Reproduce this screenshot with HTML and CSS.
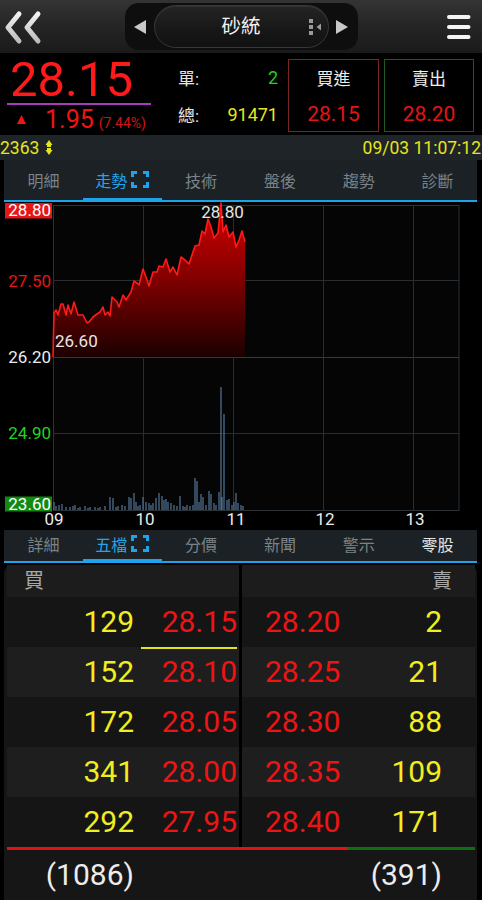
FILE: index.html
```html
<!DOCTYPE html>
<html lang="zh-Hant">
<head>
<meta charset="utf-8">
<title>砂統</title>
<link rel="stylesheet" href="styles.css">
</head>
<body>
<div class="app">
  <header class="topbar">
    <svg class="back" width="48" height="53" viewBox="0 0 48 53">
      <defs>
        <linearGradient id="chev" x1="0" y1="0" x2="0" y2="1">
          <stop offset="0" stop-color="#f2f2f2"/>
          <stop offset="1" stop-color="#bdbdbd"/>
        </linearGradient>
      </defs>
      <path d="M19 14 L8 27.5 L19 41 M38 14 L27 27.5 L38 41" fill="none" stroke="url(#chev)" stroke-width="5" stroke-linecap="round" stroke-linejoin="round"/>
    </svg>
    <div class="picker">
      <svg class="arrow" width="12" height="16" viewBox="0 0 12 16"><polygon points="12,1 0,8 12,15" fill="#c8c8c8"/></svg>
      <div class="pill">
        <span class="name">砂統</span>
        <svg class="pill-ico" width="13" height="18" viewBox="0 0 13 18">
          <rect x="0" y="1" width="4" height="4" fill="#9a9a9a"/>
          <rect x="0" y="7" width="4" height="4" fill="#9a9a9a"/>
          <rect x="0" y="13" width="4" height="4" fill="#9a9a9a"/>
          <polygon points="12,5.5 7.5,9 12,12.5" fill="#9a9a9a"/>
        </svg>
      </div>
      <svg class="arrow" width="12" height="16" viewBox="0 0 12 16"><polygon points="0,1 12,8 0,15" fill="#c8c8c8"/></svg>
    </div>
    <svg class="menu" width="48" height="53" viewBox="0 0 48 53">
      <rect x="13" y="15" width="23.5" height="4" rx="2" fill="#f4f4f4"/>
      <rect x="13" y="25" width="23.5" height="4" rx="2" fill="#f4f4f4"/>
      <rect x="13" y="35" width="23.5" height="4" rx="2" fill="#f4f4f4"/>
    </svg>
  </header>

  <section class="quote">
    <div class="last">
      <div class="price-big">28.15</div>
      <div class="uline"></div>
      <div class="chg">
        <svg class="up" width="9" height="9" viewBox="0 0 9 9"><polygon points="4.5,0 9,9 0,9" fill="#f01414"/></svg>
        <span class="chg-val">1.95</span>
        <span class="chg-pct">(7.44%)</span>
      </div>
    </div>
    <div class="vol">
      <span class="vlabel">單:</span><span class="vval green">2</span>
      <span class="vlabel">總:</span><span class="vval yellow">91471</span>
    </div>
    <div class="bs buy">
      <span class="bs-label">買進</span>
      <span class="bs-val">28.15</span>
    </div>
    <div class="bs sell">
      <span class="bs-label">賣出</span>
      <span class="bs-val">28.20</span>
    </div>
  </section>

  <div class="status">
    <span class="code">2363
      <svg class="updown" width="8" height="15" viewBox="0 0 8 15">
        <polygon points="4,0 7.5,5 0.5,5" fill="#e6e41c"/>
        <rect x="2" y="5" width="4" height="2" fill="#e6e41c"/>
        <rect x="2" y="8" width="4" height="2" fill="#e6e41c"/>
        <polygon points="0.5,10 7.5,10 4,15" fill="#e6e41c"/>
      </svg>
    </span>
    <span class="time">09/03 11:07:12</span>
  </div>

  <nav class="tabs">
    <span class="tab">明細</span>
    <span class="tab on">走勢
      <svg class="full" width="18" height="17" viewBox="0 0 18 17"><path d="M1.5 6V1.5H6 M12 1.5H16.5V6 M16.5 11V15.5H12 M6 15.5H1.5V11" fill="none" stroke="#1ea2ea" stroke-width="3"/></svg>
    </span>
    <span class="tab">技術</span>
    <span class="tab">盤後</span>
    <span class="tab">趨勢</span>
    <span class="tab">診斷</span>
  </nav>

  <svg class="chart" width="482" height="328" viewBox="0 0 482 328">
    <defs>
      <linearGradient id="area" x1="0" y1="0" x2="0" y2="155" gradientUnits="userSpaceOnUse">
        <stop offset="0" stop-color="#d40000"/>
        <stop offset="0.45" stop-color="#8a0000"/>
        <stop offset="1" stop-color="#1c0000"/>
      </linearGradient>
    </defs>
    <rect x="53.5" y="3.5" width="405.5" height="305" fill="#050505" stroke="#2c3236"/>
    <g stroke="#272d31" stroke-width="1">
      <line x1="53" y1="78.5" x2="459" y2="78.5"/>
      <line x1="53" y1="155.5" x2="459" y2="155.5" stroke="#333a3e"/>
      <line x1="53" y1="231.5" x2="459" y2="231.5"/>
      <line x1="143.5" y1="3" x2="143.5" y2="308"/>
      <line x1="233.5" y1="3" x2="233.5" y2="308"/>
      <line x1="323.5" y1="3" x2="323.5" y2="308"/>
      <line x1="413.5" y1="3" x2="413.5" y2="308"/>
    </g>
    <polygon fill="url(#area)" points="53,155 54,111 56,108 58,113 61,102 63,102 66,113 68,103 71,112 74,100 78,113 83,113 87,121 89,120 93,115 97,112 100,110 103,105 105,113 108,110 110,114 112,95 117,100 119,105 123,93 126,98 131,90 134,79 137,81 139,83 143,67 147,78 149,84 153,70 157,70 159,64 163,65 166,57 170,70 173,65 177,73 181,55 185,58 189,62 195,44 199,43 202,29 205,32 208,17 211,25 214,36 218,31 221,1 223,30 226,23 229,35 233,30 236,45 239,38 242,29 245,40 245,155"/>
    <polyline fill="none" stroke="#ff1a1a" stroke-width="1.6" stroke-linejoin="round" points="53,155 54,111 56,108 58,113 61,102 63,102 66,113 68,103 71,112 74,100 78,113 83,113 87,121 89,120 93,115 97,112 100,110 103,105 105,113 108,110 110,114 112,95 117,100 119,105 123,93 126,98 131,90 134,79 137,81 139,83 143,67 147,78 149,84 153,70 157,70 159,64 163,65 166,57 170,70 173,65 177,73 181,55 185,58 189,62 195,44 199,43 202,29 205,32 208,17 211,25 214,36 218,31 221,1 223,30 226,23 229,35 233,30 236,45 239,38 242,29 245,40"/>
    <path stroke="#4d6e8e" stroke-width="1.3" fill="none" d="M54 308V300M56 308V304M59 308V303M62 308V302M66 308V305M70 308V305M73 308V304M75 308V303M78 308V306M80 308V305M85 308V304M88 308V306M90 308V305M95 308V305M98 308V306M100 308V305M105 308V304M110 308V295M113 308V296M116 308V305M118 308V304M122 308V303M125 308V304M129 308V295M131 308V296M134 308V291M136 308V300M138 308V304M140 308V303M143 308V295M146 308V300M149 308V301M151 308V303M153 308V301M156 308V296M159 308V291M162 308V294M164 308V298M166 308V297M168 308V300M171 308V301M174 308V303M177 308V304M180 308V294M183 308V304M185 308V305M187 308V303M190 308V304M193 308V303M195 308V276M197 308V279M199 308V300M201 308V292M203 308V295M206 308V303M209 308V289M211 308V292M214 308V301M216 308V303M219 308V290M221 308V185M222 308V295M224 308V212M227 308V298M229 308V297M232 308V303M234 308V300M236 308V291M238 308V301M241 308V303M243 308V304"/>
    <rect x="5" y="1" width="47" height="15.5" fill="#e41616"/>
    <rect x="5" y="294.5" width="47" height="15" fill="#128a12"/>
    <g class="axis">
      <text x="51" y="14" fill="#ffffff" text-anchor="end">28.80</text>
      <text x="51" y="85" fill="#e41616" text-anchor="end">27.50</text>
      <text x="51" y="161" fill="#ececec" text-anchor="end">26.20</text>
      <text x="51" y="237" fill="#22d422" text-anchor="end">24.90</text>
      <text x="51" y="308" fill="#ffffff" text-anchor="end">23.60</text>
      <text x="54" y="323" fill="#ececec" text-anchor="middle">09</text>
      <text x="145" y="323" fill="#ececec" text-anchor="middle">10</text>
      <text x="236" y="323" fill="#ececec" text-anchor="middle">11</text>
      <text x="325" y="323" fill="#ececec" text-anchor="middle">12</text>
      <text x="415" y="323" fill="#ececec" text-anchor="middle">13</text>
      <text x="222.5" y="16" fill="#e6e6e6" text-anchor="middle">28.80</text>
      <text x="55" y="145" fill="#e6e6e6">26.60</text>
    </g>
  </svg>

  <nav class="tabs sub">
    <span class="tab">詳細</span>
    <span class="tab on">五檔
      <svg class="full" width="18" height="17" viewBox="0 0 18 17"><path d="M1.5 6V1.5H6 M12 1.5H16.5V6 M16.5 11V15.5H12 M6 15.5H1.5V11" fill="none" stroke="#1ea2ea" stroke-width="3"/></svg>
    </span>
    <span class="tab">分價</span>
    <span class="tab">新聞</span>
    <span class="tab">警示</span>
    <span class="tab bright">零股</span>
  </nav>

  <section class="book">
    <div class="sides">
      <div class="side">
        <div class="bhead">買</div>
        <div class="lrow dark"><span class="qty">129</span><span class="px cur">28.15</span></div>
        <div class="lrow"><span class="qty">152</span><span class="px">28.10</span></div>
        <div class="lrow dark"><span class="qty">172</span><span class="px">28.05</span></div>
        <div class="lrow"><span class="qty">341</span><span class="px">28.00</span></div>
        <div class="lrow dark"><span class="qty">292</span><span class="px">27.95</span></div>
      </div>
      <div class="side">
        <div class="bhead right">賣</div>
        <div class="rrow dark"><span class="px">28.20</span><span class="qty">2</span></div>
        <div class="rrow"><span class="px">28.25</span><span class="qty">21</span></div>
        <div class="rrow dark"><span class="px">28.30</span><span class="qty">88</span></div>
        <div class="rrow"><span class="px">28.35</span><span class="qty">109</span></div>
        <div class="rrow dark"><span class="px">28.40</span><span class="qty">171</span></div>
      </div>
    </div>
    <div class="ratio"><span class="r-buy"></span><span class="r-sell"></span></div>
    <div class="totals">
      <span class="tot-l">(1086)</span>
      <span class="tot-r">(391)</span>
    </div>
  </section>
</div>
</body>
</html>
```
FILE: styles.css
```css
html, body {
  margin: 0;
  padding: 0;
  background: #000;
}
body {
  width: 482px;
  height: 900px;
  overflow: hidden;
  font-family: Roboto, "Noto Sans CJK TC", sans-serif;
  color: #eee;
}
.app {
  width: 482px;
}

/* top bar */
.topbar {
  height: 53px;
  display: grid;
  grid-template-columns: 1fr 233px 1fr;
  align-items: center;
  background: linear-gradient(#343434, #262626 45%, #1a1a1a);
}
.back { display: block; }
.menu { display: block; justify-self: end; }
.picker {
  height: 47px;
  box-sizing: border-box;
  background: #0e0e0e;
  border-radius: 14px;
  display: flex;
  align-items: center;
  padding: 0 10px 0 9px;
}
.arrow { display: block; flex: none; }
.pill {
  position: relative;
  width: 175px;
  height: 43px;
  box-sizing: border-box;
  margin: 0 7px 0 8px;
  border-radius: 22px;
  border: 1px solid #383838;
  background: linear-gradient(#242424, #171717 60%, #111);
  box-shadow: inset 0 1px 0 rgba(255,255,255,0.07);
  display: flex;
  align-items: center;
  justify-content: center;
}
.name {
  font-size: 19.5px;
  color: #f2f2f2;
  line-height: 1;
}
.pill-ico {
  position: absolute;
  right: 6px;
  top: 12px;
}

/* quote */
.quote {
  height: 82px;
  display: flex;
  background: #000;
}
.last {
  width: 144px;
  margin-left: 7px;
  padding-top: 4px;
}
.price-big {
  font-size: 49px;
  line-height: 46px;
  color: #ff1a1a;
  padding-left: 3px;
}
.uline {
  height: 2px;
  background: #a63cb8;
}
.chg {
  display: flex;
  align-items: baseline;
  margin-top: 3px;
  line-height: 24px;
}
.up {
  align-self: center;
  margin-left: 10px;
  margin-right: 19px;
  margin-top: -4px;
}
.chg-val {
  font-size: 25px;
  color: #f01414;
}
.chg-pct {
  font-size: 14px;
  color: #d21414;
  margin-left: 5px;
}
.vol {
  flex: 1;
  display: grid;
  grid-template-columns: auto 1fr;
  grid-template-rows: 38px 37px;
  align-items: center;
  padding: 5px 10px 0 27px;
}
.vlabel {
  font-size: 17px;
  color: #e6e6e6;
}
.vval {
  font-size: 18px;
  text-align: right;
}
.green { color: #1ed41e; }
.yellow { color: #e6e61e; }
.bs {
  margin-top: 6px;
  height: 73px;
  box-sizing: border-box;
  display: flex;
  flex-direction: column;
  align-items: center;
}
.buy {
  width: 91px;
  border: 1.5px solid #7a2424;
}
.sell {
  width: 90px;
  margin-left: 5px;
  margin-right: 8px;
  border: 1.5px solid #1e581e;
}
.bs-label {
  font-size: 17px;
  line-height: 38px;
  color: #eeeeee;
}
.bs-val {
  font-size: 21px;
  line-height: 32px;
  color: #e41414;
}

/* status */
.status {
  height: 25px;
  background: #1e2428;
  display: flex;
  justify-content: space-between;
  align-items: center;
  color: #e6e41c;
  font-size: 17.5px;
  padding-right: 1px;
}
.code {
  display: flex;
  align-items: center;
  gap: 6px;
}
.updown { display: block; }

/* tabs */
.tabs {
  height: 42px;
  margin: 0 5px 0 4px;
  background: #1b2125;
  display: flex;
}
.tab {
  flex: 1;
  display: flex;
  align-items: center;
  justify-content: center;
  gap: 4px;
  font-size: 16px;
  color: #7b8387;
  box-sizing: border-box;
  padding-bottom: 3px;
  box-shadow: inset 0 -2px 0 #1ea2ea;
}
.tab.on {
  color: #26a4e8;
  box-shadow: inset 0 -4px 0 #1ea2ea;
}
.tab.bright {
  color: #e4e4e4;
}
.full { display: block; }
.tabs.sub {
  height: 33px;
}
.tabs.sub .tab {
  padding-bottom: 6px;
}

/* chart */
.chart {
  display: block;
  background: #000;
}
.axis text {
  font-family: Roboto, sans-serif;
  font-size: 17px;
}

/* order book */
.book {
  margin: 2px 5px 0 4px;
  height: 335px;
  box-sizing: border-box;
  background: #161616;
  border-radius: 8px 8px 0 0;
  padding: 0 2px 0 3px;
}
.sides {
  display: grid;
  grid-template-columns: 232px 233px;
  column-gap: 3px;
  background: #000;
}
.side {
  background: #1b1b1b;
}
.bhead {
  height: 32px;
  line-height: 32px;
  font-size: 20px;
  color: #a8a8a8;
  padding-left: 17px;
  background: #1c1c1c;
}
.bhead.right {
  text-align: right;
  padding-left: 0;
  padding-right: 23px;
}
.lrow, .rrow {
  height: 50px;
  display: grid;
  font-size: 30px;
  line-height: 50px;
  background: #1e1e1e;
}
.lrow.dark, .rrow.dark {
  background: #151515;
}
.lrow {
  grid-template-columns: 127px 96px;
  column-gap: 7px;
}
.lrow span { text-align: right; }
.rrow {
  grid-template-columns: 1fr auto;
  padding: 0 33px 0 23px;
}
.qty { color: #f2ee1e; }
.px { color: #ee1414; }
.px.cur {
  box-sizing: border-box;
  border-bottom: 2px solid #e8e21c;
}
.ratio {
  display: flex;
  height: 3px;
}
.r-buy { flex: 341; background: #e21212; }
.r-sell { flex: 127; background: #0f6e12; }
.totals {
  height: 50px;
  display: grid;
  grid-template-columns: 232px 233px;
  column-gap: 3px;
  font-size: 30px;
  line-height: 50px;
  color: #ececec;
}
.tot-l {
  text-align: right;
  padding-right: 105px;
}
.tot-r {
  text-align: right;
  padding-right: 33px;
}
```
